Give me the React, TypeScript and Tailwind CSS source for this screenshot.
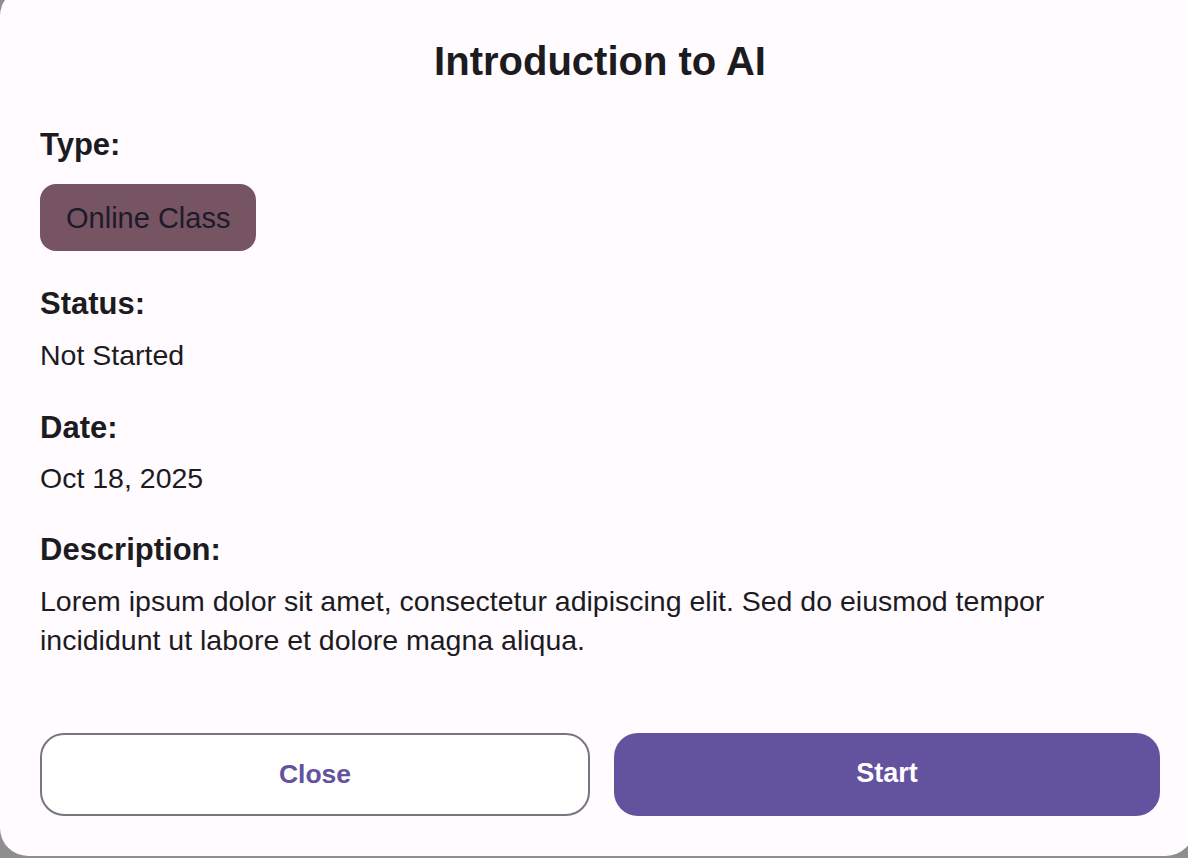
export default function App() {
  return (
    <div className="w-[1188px] h-[858px] overflow-hidden bg-[#8e8e8e]" style={{ fontFamily: '"Liberation Sans", Arial, sans-serif' }}>
      <div className="mt-[-12px] w-[1194px] h-[868px] rounded-[28px] bg-[#fffbfe] text-[#1c1b1f] flex flex-col pl-[40px] pt-[49px]">
        <h1 className="w-[1120px] text-center text-[40px] leading-[48px] font-bold">Introduction to AI</h1>

        <div className="mt-[42px] text-[31px] leading-[36px] font-bold">Type:</div>
        <div className="mt-[21px] flex">
          <span className="h-[67px] px-[26px] flex items-center rounded-[16px] bg-[#775462] text-[#1d1a2c] text-[29px] leading-[36px]">Online Class</span>
        </div>

        <div className="mt-[35px] text-[31px] leading-[36px] font-bold">Status:</div>
        <div className="mt-[14px] text-[28.5px] leading-[39px]">Not Started</div>

        <div className="mt-[35px] text-[31px] leading-[36px] font-bold">Date:</div>
        <div className="mt-[13px] text-[28.5px] leading-[39px]">Oct 18, 2025</div>

        <div className="mt-[34px] text-[31px] leading-[36px] font-bold">Description:</div>
        <p className="mt-[14px] w-[1060px] text-[28.5px] leading-[39px]">
          Lorem ipsum dolor sit amet, consectetur adipiscing elit. Sed do eiusmod tempor incididunt ut labore et dolore magna aliqua.
        </p>

        <div className="mt-[73px] w-[1120px] grid grid-cols-[550px_546px] gap-[24px]">
          <button className="h-[83px] rounded-[24px] border-2 border-[#79747e] bg-white text-[#63529e] text-[26.5px] font-bold">Close</button>
          <button className="h-[83px] rounded-[24px] bg-[#63529e] text-white text-[27px] font-bold pb-[3px]">Start</button>
        </div>
      </div>
    </div>
  );
}
